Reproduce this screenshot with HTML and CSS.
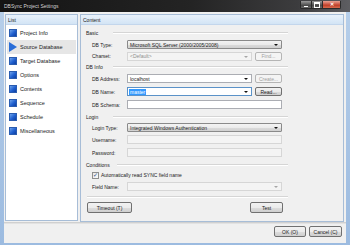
FILE: index.html
```html
<!DOCTYPE html>
<html lang="en">
<head>
    <meta charset="UTF-8">
    <title>DBSync Project Settings</title>
    <link rel="stylesheet" href="styles.css">
</head>
<body>
    <div class="window">
        <div class="titlebar">
            <span class="title">DBSync Project Settings</span>
            <div class="caption">
                <span class="cbtn min"></span>
                <span class="cbtn max"></span>
                <span class="cbtn close">✕</span>
            </div>
        </div>
        <div class="client">
            <div class="panes">
                <div class="panel list-panel">
                    <div class="panel-head">List</div>
                    <ul class="nav">
                        <li><span class="ico"></span>Project Info</li>
                        <li class="active"><span class="ico play"></span>Source Database</li>
                        <li><span class="ico"></span>Target Database</li>
                        <li><span class="ico"></span>Options</li>
                        <li><span class="ico"></span>Contents</li>
                        <li><span class="ico"></span>Sequence</li>
                        <li><span class="ico"></span>Schedule</li>
                        <li><span class="ico"></span>Miscellaneous</li>
                    </ul>
                </div>
                <div class="panel content-panel">
                    <div class="panel-head">Content</div>
                    <div class="form">
                        <div class="ghead h12"><span>Basic</span><i></i></div>
                        <div class="row h11">
                            <label>DB Type:</label>
                            <div class="ctl combo">Microsoft SQL Server (2000/2005/2008)<b></b></div>
                        </div>
                        <div class="row h12">
                            <label>Charset:</label>
                            <div class="ctl edit disabled short">&lt;Default&gt;<b></b></div>
                            <span class="btn disabled small">Find...</span>
                        </div>

                        <div class="ghead h10"><span>DB Info</span><i></i></div>
                        <div class="row">
                            <label>DB Address:</label>
                            <div class="ctl edit short">localhost<b></b></div>
                            <span class="btn disabled small">Create...</span>
                        </div>
                        <div class="row">
                            <label>DB Name:</label>
                            <div class="ctl edit focus short"><em>master</em><b></b></div>
                            <span class="btn small">Read...</span>
                        </div>
                        <div class="row">
                            <label>DB Schema:</label>
                            <div class="ctl edit"></div>
                        </div>

                        <div class="ghead h11"><span>Login</span><i></i></div>
                        <div class="row h11">
                            <label>Login Type:</label>
                            <div class="ctl combo">Integrated Windows Authentication<b></b></div>
                        </div>
                        <div class="row">
                            <label>Username:</label>
                            <div class="ctl edit disabled"></div>
                        </div>
                        <div class="row">
                            <label>Password:</label>
                            <div class="ctl edit disabled"></div>
                        </div>

                        <div class="ghead h11"><span>Conditions</span><i></i></div>
                        <div class="row h10 check-row">
                            <span class="check">✓</span>Automatically read SYNC field name
                        </div>
                        <div class="row">
                            <label>Field Name:</label>
                            <div class="ctl edit disabled"><b></b></div>
                        </div>

                        <div class="etch"></div>
                        <div class="actions">
                            <span class="btn timeout">Timeout (T)</span>
                            <span class="btn test">Test</span>
                        </div>
                    </div>
                </div>
            </div>
            <div class="footer">
                <span class="btn dlg">OK (O)</span>
                <span class="btn dlg">Cancel (C)</span>
            </div>
        </div>
    </div>
</body>
</html>
```

FILE: styles.css
```css
* {
    margin: 0;
    padding: 0;
    box-sizing: border-box;
}

body {
    width: 350px;
    height: 245px;
    overflow: hidden;
    font-family: "Liberation Sans", Arial, sans-serif;
    font-size: 5px;
    color: #1b1b1b;
    background: #9fbde0;
}

.window {
    display: flex;
    flex-direction: column;
    height: 245px;
    background: linear-gradient(180deg, #b7cfea, #9cbbe0);
}

.titlebar {
    height: 12px;
    display: flex;
    align-items: center;
    justify-content: space-between;
    padding-left: 4px;
    background: linear-gradient(90deg, #141414 0%, #242424 55%, #3c3c3e 85%, #5e5e62 100%);
}

.title {
    color: #d8d8d8;
    font-size: 5px;
    text-shadow: 0 0 2px #000;
}

.caption {
    display: flex;
    align-self: flex-start;
    margin-right: 9px;
    margin-top: 1px;
}

.cbtn {
    height: 8px;
    border: 1px solid #2a2a2a;
    border-top: none;
    background: linear-gradient(180deg, #9a9a9a, #5a5a5a 50%, #3e3e3e 51%, #6a6a6a);
    display: flex;
    align-items: center;
    justify-content: center;
    color: #fff;
    font-size: 5px;
    line-height: 1;
}

.cbtn.min {
    width: 12px;
    border-radius: 0 0 0 2px;
}

.cbtn.min::after {
    content: "";
    width: 4px;
    height: 1px;
    margin-top: 3px;
    background: #fff;
}

.cbtn.max {
    width: 11px;
    border-left: none;
}

.cbtn.max::after {
    content: "";
    width: 4px;
    height: 3px;
    border: 1px solid #fff;
    border-top-width: 2px;
}

.cbtn.close {
    width: 18px;
    border-left: none;
    border-radius: 0 0 2px 0;
    background: linear-gradient(180deg, #e8a193, #c9503c 50%, #b83620 51%, #d86a4e);
    font-weight: bold;
}

.client {
    flex: 1;
    margin: 0 4px 2px 4px;
    background: #f0f0f0;
    display: flex;
    flex-direction: column;
}

.panes {
    display: flex;
    gap: 2px;
    padding: 2px 2px 0 1px;
    height: 210px;
}

.panel {
    border: 1px solid #a7bdd7;
    display: flex;
    flex-direction: column;
}

.list-panel {
    width: 73px;
    height: 207px;
    background: #fff;
}

.content-panel {
    width: 264px;
    background: #f0f0f0;
}

.panel-head {
    height: 10px;
    line-height: 10px;
    padding-left: 2px;
    background: linear-gradient(180deg, #e9f2fb, #d3e4f5);
    border-bottom: 1px solid #c3d6ec;
    color: #222;
}

.nav {
    list-style: none;
    padding: 1px 1px 0 1px;
}

.nav li {
    height: 14px;
    display: flex;
    align-items: center;
    padding-left: 2px;
    font-size: 5.5px;
}

.nav li.active {
    background: #e6e6e6;
}

.ico {
    width: 8px;
    height: 8px;
    margin-right: 3px;
    background: linear-gradient(135deg, #6fa3ea, #1f5fcf 55%, #0f3f9f);
    border: 1px solid #2a5cb0;
}

.ico.play {
    width: 0;
    height: 0;
    border: none;
    border-top: 5px solid transparent;
    border-bottom: 5px solid transparent;
    border-left: 8px solid #2a6ed8;
    background: none;
}

.form {
    padding: 2px 0 0 5px;
}

.ghead {
    width: 202px;
    display: flex;
    align-items: center;
}

.ghead span {
    min-width: 27px;
    padding-right: 7px;
}

.ghead i {
    flex: 1;
    height: 2px;
    border-top: 1px solid #d5d5d5;
    border-bottom: 1px solid #fff;
}

.row {
    height: 13px;
    display: flex;
    align-items: center;
}

.h10 { height: 10px; }
.h11 { height: 11px; }
.h12 { height: 12px; }

.row label {
    width: 35px;
    margin-left: 6px;
}

.ctl {
    width: 155px;
    height: 9px;
    display: flex;
    align-items: center;
    padding-left: 2px;
    border: 1px solid #abadb3;
    background: #fff;
    position: relative;
    white-space: nowrap;
}

.ctl.short {
    width: 125px;
}

.ctl b {
    position: absolute;
    right: 3px;
    top: 3px;
    border-left: 2px solid transparent;
    border-right: 2px solid transparent;
    border-top: 2px solid #111;
}

.ctl.combo {
    border-color: #8a8a8a;
    border-radius: 1px;
    background: linear-gradient(180deg, #f3f3f3, #ebebeb 50%, #dcdcdc 51%, #d0d0d0);
}

.ctl.disabled {
    background: #f4f4f4;
    border-color: #d6d6d6;
    color: #8d8d8d;
}

.ctl.disabled b {
    border-top-color: #a6a6a6;
}

.ctl.focus {
    border-color: #5b92c8;
}

.ctl em {
    font-style: normal;
    background: #3399ff;
    color: #fff;
    padding: 0 1px;
    margin-left: -1px;
}

.btn {
    display: flex;
    align-items: center;
    justify-content: center;
    height: 9px;
    border: 1px solid #707070;
    border-radius: 2px;
    background: linear-gradient(180deg, #f2f2f2, #ebebeb 50%, #dddddd 51%, #cfcfcf);
    color: #1b1b1b;
}

.btn.small {
    width: 27px;
    margin-left: 3px;
}

.btn.disabled {
    background: #f4f4f4;
    border-color: #b5b5b5;
    color: #a0a0a0;
}

.check-row {
    padding-left: 6px;
}

.check {
    width: 7px;
    height: 7px;
    margin-right: 2px;
    border: 1px solid #8e8f8f;
    background: linear-gradient(135deg, #e8e8e8, #fafafa);
    color: #2a4d8a;
    font-size: 6px;
    line-height: 5px;
    text-align: center;
}

.etch {
    width: 201px;
    height: 2px;
    margin: 3px 0 0 1px;
    border-top: 1px solid #d5d5d5;
    border-bottom: 1px solid #fff;
}

.actions {
    width: 196px;
    margin: 4px 0 0 1px;
    display: flex;
    justify-content: space-between;
}

.btn.timeout {
    width: 45px;
    height: 11px;
}

.btn.test {
    width: 33px;
    height: 11px;
}

.footer {
    flex: 1;
    display: flex;
    justify-content: flex-end;
    gap: 3px;
    padding: 3px 4px 0 0;
    border-top: 1px solid #d0d0d0;
    box-shadow: inset 0 1px 0 #e2e2e2;
}

.btn.dlg {
    width: 32px;
    height: 11px;
}

.btn.dlg + .btn.dlg {
    width: 33px;
}
```
